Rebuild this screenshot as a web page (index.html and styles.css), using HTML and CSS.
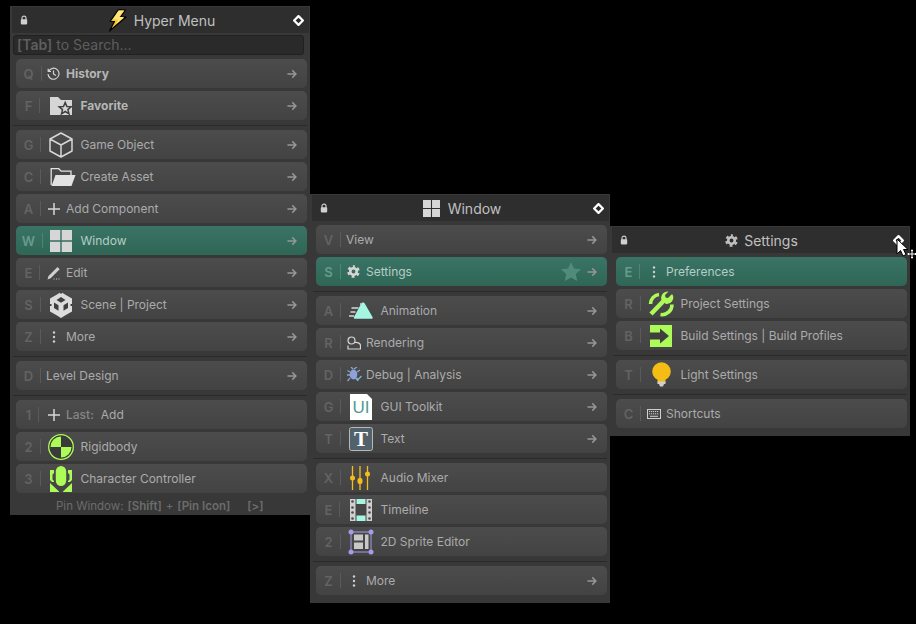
FILE: index.html
```html
<!DOCTYPE html>
<html lang="en">
<head>
<meta charset="utf-8">
<title>Hyper Menu</title>
<link rel="stylesheet" href="styles.css">
</head>
<body>
<svg class="defs" width="0" height="0">
  <defs>
    <symbol id="lock" viewBox="0 0 10 12"><path d="M2.500 6V3.600a2.500 2.500 0 0 1 5 0V6" fill="none" stroke="#d0d0d0" stroke-width="1.400"/><rect x="1" y="5" width="8" height="6.500" rx="1" fill="#d0d0d0"/></symbol>
    <symbol id="pin" viewBox="0 0 12 12"><rect x="2.600" y="2.600" width="6.800" height="6.800" transform="rotate(45 6 6)" fill="#2b2b2b" stroke="#fff" stroke-width="2.400" stroke-linejoin="round"/></symbol>
    <symbol id="arrow" viewBox="0 0 11 10"><path d="M.5 5h9M5.800 1l4 4-4 4" fill="none" stroke="#969696" stroke-width="1.600"/></symbol>
    <symbol id="gear" viewBox="0 0 14 14"><circle cx="7" cy="7" r="3.500" fill="none" stroke="currentColor" stroke-width="2.800"/><circle cx="7" cy="7" r="5.600" fill="none" stroke="currentColor" stroke-width="2.400" stroke-dasharray="3.060 2.800" stroke-dashoffset="1.530" transform="rotate(-90 7 7)"/></symbol>
    <symbol id="win" viewBox="0 0 22 22"><path d="M0 0h10.300v10.300H0zM11.700 0H22v10.300H11.700zM0 11.700h10.300V22H0zM11.700 11.700H22V22H11.700z" fill="#d6d6d6"/></symbol>
    <symbol id="dots" viewBox="0 0 4 12"><circle cx="2" cy="1.500" r="1.200" fill="#cfcfcf"/><circle cx="2" cy="6" r="1.200" fill="#cfcfcf"/><circle cx="2" cy="10.500" r="1.200" fill="#cfcfcf"/></symbol>
    <symbol id="plus" viewBox="0 0 12 12"><path d="M6 0v12M0 6h12" stroke="#d6d6d6" stroke-width="1.500"/></symbol>
  </defs>
</svg>

<section class="panel panel-main">
  <header class="head">
    <svg class="lock"><use href="#lock"/></svg>
    <div class="title title-main">
      <svg class="bolt" viewBox="0 0 19 23"><path d="M10.500.700 17.500 1 12.500 8h5.500L1.500 22 6.500 12.500H2z" fill="#f7c22c" stroke="#000" stroke-width="1.200" stroke-linejoin="round"/><path d="M10.500 1.500h5.500L11 8h5L8 15l2-4.500H5z" fill="#fde77f"/></svg>
      <span>Hyper Menu</span>
    </div>
    <svg class="pin"><use href="#pin"/></svg>
  </header>
  <div class="search"><b>[Tab]</b> to Search...</div>
  <div class="body">
    <div class="row"><span class="key"><i>Q</i></span><span class="slot"><svg class="ic13" viewBox="0 0 13 13"><path d="M1.200 1.700V4.500H4M1.500 4.400A5.500 5.500 0 1 1 1 7M6.500 3.500V7L9 8.400" fill="none" stroke="#d4d4d4" stroke-width="1.200"/></svg></span><span class="label strong">History</span><svg class="arrow"><use href="#arrow"/></svg></div>
    <div class="row"><span class="key"><i>F</i></span><span class="slot wide"><svg class="ic22" viewBox="0 0 22 18"><path d="M0 0h8l3 3h11v15H0z" fill="#d6d6d6"/><path d="m15.200 5.500 1.700 4 4.300.300-3.300 2.800 1.100 4.200-3.800-2.300-3.700 2.300 1-4.200L9.200 9.800l4.300-.3z" fill="#d6d6d6" stroke="#3f3f3f" stroke-width="1.500"/></svg></span><span class="label strong">Favorite</span><svg class="arrow"><use href="#arrow"/></svg></div>
    <hr class="sep">
    <div class="row"><span class="key"><i>G</i></span><span class="slot wide"><svg class="ic26" viewBox="0 0 24 26"><path d="M12 1 23 7v12l-11 6-11-6V7zM1 7l11 6 11-6M12 13v12" fill="none" stroke="#d6d6d6" stroke-width="1.500" stroke-linejoin="round"/></svg></span><span class="label">Game Object</span><svg class="arrow"><use href="#arrow"/></svg></div>
    <div class="row"><span class="key"><i>C</i></span><span class="slot wide"><svg class="ic26 folder" viewBox="0 0 25 18"><path d="M.700 17V.700h7.500l2.500 2.500h9.800V7" fill="none" stroke="#e2e2e2" stroke-width="1.300"/><path d="M5 7h20l-4 11H1z" fill="#e2e2e2"/></svg></span><span class="label">Create Asset</span><svg class="arrow"><use href="#arrow"/></svg></div>
    <div class="row"><span class="key"><i>A</i></span><span class="slot"><svg class="ic12"><use href="#plus"/></svg></span><span class="label">Add Component</span><svg class="arrow"><use href="#arrow"/></svg></div>
    <div class="row active"><span class="key"><i>W</i></span><span class="slot wide"><svg class="ic22b"><use href="#win"/></svg></span><span class="label">Window</span><svg class="arrow"><use href="#arrow"/></svg></div>
    <div class="row"><span class="key"><i>E</i></span><span class="slot"><svg class="ic14" viewBox="0 0 14 14"><path d="M.500 13.500 1.500 10 10.500 1l2.200 2.200-9 9z" fill="#cfcfcf"/><path d="M6.500 13h1M9 13h1M11.500 13h1" stroke="#cfcfcf" stroke-width="1"/></svg></span><span class="label">Edit</span><svg class="arrow"><use href="#arrow"/></svg></div>
    <div class="row"><span class="key"><i>S</i></span><span class="slot wide"><svg class="ic26" viewBox="0 0 22 26"><path d="M11 0 15 2.500 22 6.500V19.500l-7 4-4 2.500-4-2.500-7-4V6.500l7-4z" fill="#dcdcdc"/><path d="M11 5 6.500 8l4.500 2.700L15.500 8zM4 10.500V16l4.500 2.700v-5.500zM18 10.500V16l-4.500 2.700v-5.500z" fill="#3f3f3f"/><path d="M0 13h1.500M20.500 13H22M11 0v1.500" stroke="#3f3f3f" stroke-width="2"/></svg></span><span class="label">Scene | Project</span><svg class="arrow"><use href="#arrow"/></svg></div>
    <div class="row"><span class="key"><i>Z</i></span><span class="slot"><svg class="dots"><use href="#dots"/></svg></span><span class="label">More</span><svg class="arrow"><use href="#arrow"/></svg></div>
    <hr class="sep">
    <div class="row"><span class="key"><i>D</i></span><span class="label bare">Level Design</span><svg class="arrow"><use href="#arrow"/></svg></div>
    <hr class="sep">
    <div class="row"><span class="key"><i>1</i></span><span class="slot"><svg class="ic12"><use href="#plus"/></svg></span><span class="label"><em>Last:</em>Add</span></div>
    <div class="row"><span class="key"><i>2</i></span><span class="slot wide"><svg class="ic26" viewBox="0 0 26 26"><circle cx="13" cy="13" r="12.300" fill="#3a3a3a" stroke="#adfb58" stroke-width="1.300"/><path d="M13 2.500V13H2.500A10.500 10.500 0 0 1 13 2.500zM13 13h10.500A10.500 10.500 0 0 1 13 23.500z" fill="#adfb58"/></svg></span><span class="label">Rigidbody</span></div>
    <div class="row clipped"><span class="key"><i>3</i></span><span class="slot wide"><svg class="ic-cc" viewBox="0 0 22 26"><path d="M0 4h4v3L2.500 8.500v5L4 15v1H2L0 14zM22 4h-4v3l1.500 1.500v5L18 15v1h2l2-2zM0 17l9 8.500V26H0zM22 17l-9 8.500V26h9z" fill="#adfb58"/><rect x="5.800" y="0" width="10.400" height="20" rx="5.200" fill="#adfb58"/></svg></span><span class="label">Character Controller</span></div>
    <div class="foot">Pin Window: <b>[Shift]</b> + <b>[Pin Icon]</b><b class="gt">[&gt;]</b></div>
  </div>
</section>

<section class="panel panel-window">
  <header class="head">
    <svg class="lock"><use href="#lock"/></svg>
    <div class="title title-window"><svg class="tw"><use href="#win"/></svg><span>Window</span></div>
    <svg class="pin"><use href="#pin"/></svg>
  </header>
  <div class="body">
    <div class="row"><span class="key"><i>V</i></span><span class="label bare">View</span><svg class="arrow"><use href="#arrow"/></svg></div>
    <div class="row active"><span class="key"><i>S</i></span><span class="slot"><svg class="ic13 gearic"><use href="#gear"/></svg></span><span class="label">Settings</span><svg class="star" viewBox="0 0 20 19"><path d="m10 0 3 6.500 7 .800-5.200 4.800 1.400 6.900L10 15.500 3.800 19l1.400-6.900L0 7.300l7-.8z" fill="#4f8d7a"/></svg><svg class="arrow"><use href="#arrow"/></svg></div>
    <hr class="sep">
    <div class="row"><span class="key"><i>A</i></span><span class="slot wide"><svg class="ic26 anim" viewBox="0 0 24 17"><path d="M12 2h-1M2.500 6h7M1.500 10h5M0 14h5" stroke="#d6d6d6" stroke-width="1.300"/><path d="M14 .500c1 0 1.500.5 2 1.500l7.500 13c.500 1 0 1.800-1 1.800H6c-1 0-1.500-.8-1-1.800L12 2c.500-1 1-1.500 2-1.500z" fill="#a5f5e3"/></svg></span><span class="label">Animation</span><svg class="arrow"><use href="#arrow"/></svg></div>
    <div class="row"><span class="key"><i>R</i></span><span class="slot"><svg class="ic14" viewBox="0 0 14 14"><circle cx="4.500" cy="4.500" r="3.500" fill="none" stroke="#d6d6d6" stroke-width="1.200"/><path d="M7.500 6.500c2.500-.5 6 .5 6 3V13H1v-3.500" fill="none" stroke="#d6d6d6" stroke-width="1.200"/></svg></span><span class="label">Rendering</span><svg class="arrow"><use href="#arrow"/></svg></div>
    <div class="row"><span class="key"><i>D</i></span><span class="slot"><svg class="ic15" viewBox="0 0 15 15"><ellipse cx="6.500" cy="7.500" rx="3.800" ry="5" fill="#8ea2d6"/><path d="M6 2 4 0M7 2l3-2M3 5 .500 3.500M10 5l3-2M3 8H0M3 11l-2.500 3M10 11l1 3" stroke="#8ea2d6" stroke-width="1.300"/><path d="m8.500 11 2 2 4-4" fill="none" stroke="#7fb5d8" stroke-width="1.300"/></svg></span><span class="label">Debug | Analysis</span><svg class="arrow"><use href="#arrow"/></svg></div>
    <div class="row"><span class="key"><i>G</i></span><span class="slot wide"><svg class="ic-ui" viewBox="0 0 22 26"><path d="M0 0h17l5 5v21H0z" fill="#fff"/><text x="11" y="19" text-anchor="middle" class="ui-text">UI</text></svg></span><span class="label">GUI Toolkit</span><svg class="arrow"><use href="#arrow"/></svg></div>
    <div class="row"><span class="key"><i>T</i></span><span class="slot wide"><svg class="ic-t" viewBox="0 0 24 24"><rect x=".500" y=".500" width="23" height="23" rx="2" fill="#52626c" stroke="#b9b9b9"/><text x="12" y="18.500" text-anchor="middle" class="t-text">T</text></svg></span><span class="label">Text</span><svg class="arrow"><use href="#arrow"/></svg></div>
    <hr class="sep">
    <div class="row"><span class="key"><i>X</i></span><span class="slot wide"><svg class="ic-mix" viewBox="0 0 20 24"><path d="M2.500 0v24M10 0v24M17.500 0v24" stroke="#f4bd1d" stroke-width="1.300"/><circle cx="2.500" cy="12" r="2.500" fill="#f4bd1d"/><rect x="7.500" y="12" width="5" height="6" rx="2" fill="#f4bd1d"/><circle cx="17.500" cy="8" r="2.500" fill="#f4bd1d"/></svg></span><span class="label">Audio Mixer</span></div>
    <div class="row"><span class="key"><i>E</i></span><span class="slot wide"><svg class="ic-film" viewBox="0 0 22 22"><rect width="22" height="22" fill="#d0d0d0"/><rect x="5.500" y="0" width="11" height="22" fill="#464646"/><path d="M6.500 0h9v5h-9zM6.500 16.500h9V22h-9z" fill="#a5f5e3"/><g fill="#4a4a4a"><circle cx="2.500" cy="2.500" r="1.300"/><circle cx="2.500" cy="8.500" r="1.300"/><circle cx="2.500" cy="13.500" r="1.300"/><circle cx="2.500" cy="19.500" r="1.300"/><circle cx="19.500" cy="2.500" r="1.300"/><circle cx="19.500" cy="8.500" r="1.300"/><circle cx="19.500" cy="13.500" r="1.300"/><circle cx="19.500" cy="19.500" r="1.300"/></g></svg></span><span class="label">Timeline</span></div>
    <div class="row"><span class="key"><i>2</i></span><span class="slot wide"><svg class="ic26" viewBox="0 0 26 26"><rect x="3" y="3" width="20" height="20" fill="none" stroke="#a59be6" stroke-width="1"/><path d="M6 5.500h9v6H6zM6 13.500h9V20H6zM17 5.500h3.500V20H17z" fill="#c9c9c9"/><g fill="#a59be6"><circle cx="3" cy="3" r="2.500"/><circle cx="23" cy="3" r="2.500"/><circle cx="3" cy="23" r="2.500"/><circle cx="23" cy="23" r="2.500"/></g></svg></span><span class="label">2D Sprite Editor</span></div>
    <hr class="sep">
    <div class="row"><span class="key"><i>Z</i></span><span class="slot"><svg class="dots"><use href="#dots"/></svg></span><span class="label">More</span><svg class="arrow"><use href="#arrow"/></svg></div>
  </div>
</section>

<section class="panel panel-settings">
  <header class="head">
    <svg class="lock"><use href="#lock"/></svg>
    <div class="title title-settings"><svg class="tg"><use href="#gear"/></svg><span>Settings</span></div>
    <svg class="pin"><use href="#pin"/></svg>
  </header>
  <div class="body">
    <div class="row active"><span class="key"><i>E</i></span><span class="slot"><svg class="dots"><use href="#dots"/></svg></span><span class="label">Preferences</span></div>
    <div class="row"><span class="key"><i>R</i></span><span class="slot wide"><svg class="ic26" viewBox="0 0 26 26"><path d="M3 23 16 9.500" stroke="#adfb58" stroke-width="4.500" fill="none"/><path d="M23.500 3.500 20 7l-2.500-.5L17 4l3.500-3.500a6.500 6.500 0 0 0-7 8.500l4.500 4a6.500 6.500 0 0 0 6.500-9.500z" fill="#adfb58"/><path d="M2.500 13A9.500 9.500 0 0 1 11 3.500M24 13.500A10 10 0 0 1 12.500 23.500" fill="none" stroke="#adfb58" stroke-width="3.500"/></svg></span><span class="label">Project Settings</span></div>
    <div class="row"><span class="key"><i>B</i></span><span class="slot wide"><svg class="ic-build" viewBox="0 0 22 22"><path d="M0 0h22v22H0z" fill="#adfb58"/><path d="M0 7.500h10V3.500l9 7.500-9 7.500v-4H0z" fill="#3f3f3f"/></svg></span><span class="label">Build Settings | Build Profiles</span></div>
    <hr class="sep">
    <div class="row"><span class="key"><i>T</i></span><span class="slot wide"><svg class="ic-bulb" viewBox="0 0 19 25"><circle cx="9.500" cy="9.500" r="9.300" fill="#f6bc16"/><path d="M5.500 18h8v2.500h-8z" fill="#f6bc16"/><path d="M5.500 19.500h8v2.500h-1.500l-1 2.500h-3L7 22H5.500z" fill="#d0d0d0"/></svg></span><span class="label">Light Settings</span></div>
    <hr class="sep">
    <div class="row"><span class="key"><i>C</i></span><span class="slot"><svg class="kbd" viewBox="0 0 14 10"><rect x=".500" y=".500" width="13" height="9" fill="none" stroke="#cfcfcf"/><path d="M2 2.500h10M2 4.800h10" stroke="#cfcfcf" stroke-dasharray="1.200 .800"/><path d="M3 7.300h8" stroke="#cfcfcf"/></svg></span><span class="label">Shortcuts</span></div>
  </div>
</section>

<svg class="cursor" viewBox="0 0 24 22"><path d="M1 1v15l3.500-3.500L7 18l3-1.500-2.500-5H12z" fill="#fff" stroke="#000" stroke-width="1"/><path d="M16 11.500v9M11.500 16h9M15 12.500h2M15 19.500h2M12.500 15v2M19.500 15v2" stroke="#fff" stroke-width="1"/></svg>
</body>
</html>
```

FILE: styles.css
```css
* { box-sizing: border-box; }
html, body { margin: 0; height: 100%; background: #000; overflow: hidden; }
body { font-family: Inter, "Liberation Sans", sans-serif; font-size: 12px; color: #ababab; }
.defs { position: absolute; }

.panel { position: absolute; width: 300px; background: #383838; padding-top: 1px; }
.panel-main { left: 10px; top: 6px; height: 509px; }
.panel-window { left: 310px; top: 194px; height: 409px; }
.panel-settings { left: 610px; top: 226px; height: 210px; }

.head { height: 26px; margin: 0 1px 0 2px; background: #2e2e2e; display: flex; align-items: center; justify-content: space-between; padding: 0 5px 0 8px; position: relative; }
.lock { width: 8px; height: 10px; }
.pin { width: 11px; height: 11px; }
.title { position: absolute; left: 0; right: 0; top: 0; bottom: 0; display: flex; align-items: center; justify-content: center; gap: 8px; font-size: 14px; color: #c0c0c0; }
.title-main { gap: 7px; padding-left: 2px; }
.title-window { padding-left: 3px; }
.title-settings { gap: 6px; padding-left: 2px; }
.bolt { width: 19px; height: 23px; }
.tw { width: 17px; height: 17px; }
.tg { width: 13px; height: 13px; color: #c0c0c0; }

.search { margin: 2px 6px 0 3px; height: 20px; border: 1px solid #212121; border-radius: 3px; background: #2a2a2a; color: #5e5e5e; font-size: 14px; line-height: 18px; padding-left: 3px; }
.search b { font-weight: 600; }

.body { padding: 4px 3px 0 6px; display: flex; flex-direction: column; }

.row { flex: none; height: 29px; margin-bottom: 3px; border-radius: 5px; background: linear-gradient(#4c4c4c, #434343); display: flex; align-items: center; padding-right: 10px; }
.row.active { background: linear-gradient(#3a7465, #2f6656); color: #b6cdc5; }
.row.active .key { color: #6a9a8b; }
.row.active .key i::after { background: #4b8574; }

.key { flex: none; width: 25px; text-align: center; color: #636363; font-weight: 600; font-size: 13px; line-height: 16px; }
.key i { font-style: normal; position: relative; display: inline-block; }
.key i::after { content: ""; position: absolute; left: calc(100% + 7px); top: 0; width: 1px; height: 15px; background: #5a5a5a; }

.slot { flex: none; width: 20px; margin-left: 5px; display: flex; align-items: center; padding-left: 2px; }
.slot.wide { width: 34.500px; }
.label { flex: 1; white-space: nowrap; }
.label.bare { margin-left: 5px; }
.label.strong { font-weight: 700; color: #b6b6b6; }
.label em { font-style: normal; font-weight: 500; color: #858585; margin-right: 7px; }
.arrow { flex: none; width: 10px; height: 10px; }
.star { flex: none; width: 20px; height: 19px; margin-right: 6px; }

.ic12 { width: 12px; height: 12px; }
.ic13 { width: 13px; height: 13px; flex: none; margin-left: -1px; }
.ic14 { width: 14px; height: 14px; margin-left: -1px; flex: none; }
.ic15 { width: 15px; height: 15px; margin-left: -1px; flex: none; }
.ic22 { width: 22px; height: 18px; margin-left: 2px; flex: none; }
.ic22b { width: 22px; height: 22px; margin-left: 2px; flex: none; }
.ic26 { width: 26px; height: 26px; display: block; flex: none; }
.folder { height: 18px; margin-left: 2px; }
.anim { height: 17px; }
.gearic { color: #d6d6d6; }
.dots { width: 4px; height: 12px; margin-left: 4px; flex: none; }
.ic-cc { width: 22px; height: 26px; margin-left: 2px; flex: none; }
.clipped { overflow: hidden; }
.ic-ui { width: 22px; height: 26px; margin-left: 2px; flex: none; }
.ic-t { width: 24px; height: 24px; margin-left: 1px; flex: none; }
.ic-mix { width: 20px; height: 24px; margin-left: 2px; flex: none; }
.ic-film { width: 22px; height: 22px; margin-left: 2px; flex: none; }
.ic-build { width: 22px; height: 22px; margin-left: 2px; flex: none; }
.ic-bulb { width: 19px; height: 25px; margin-left: 4px; flex: none; }
.kbd { width: 14px; height: 10px; flex: none; margin-left: -1px; }
.ui-text { font-family: "Liberation Sans", sans-serif; font-size: 17px; fill: #4f9a92; }
.t-text { font-family: "Liberation Serif", serif; font-size: 21px; font-weight: 700; fill: #fff; }

.sep { flex: none; width: auto; align-self: stretch; height: 1px; border: 0; margin: 2px 0 4px -3px; background: #2a2a2a; }

.foot { flex: none; height: 19px; margin-top: -3px; padding: 6px 0 0 40px; display: flex; align-items: center; gap: 4px; font-size: 11.500px; color: #6c6c6c; white-space: nowrap; }
.foot b { font-weight: 600; }
.foot .gt { margin-left: 13px; }

.cursor { position: absolute; left: 896px; top: 238px; width: 24px; height: 22px; }
```
